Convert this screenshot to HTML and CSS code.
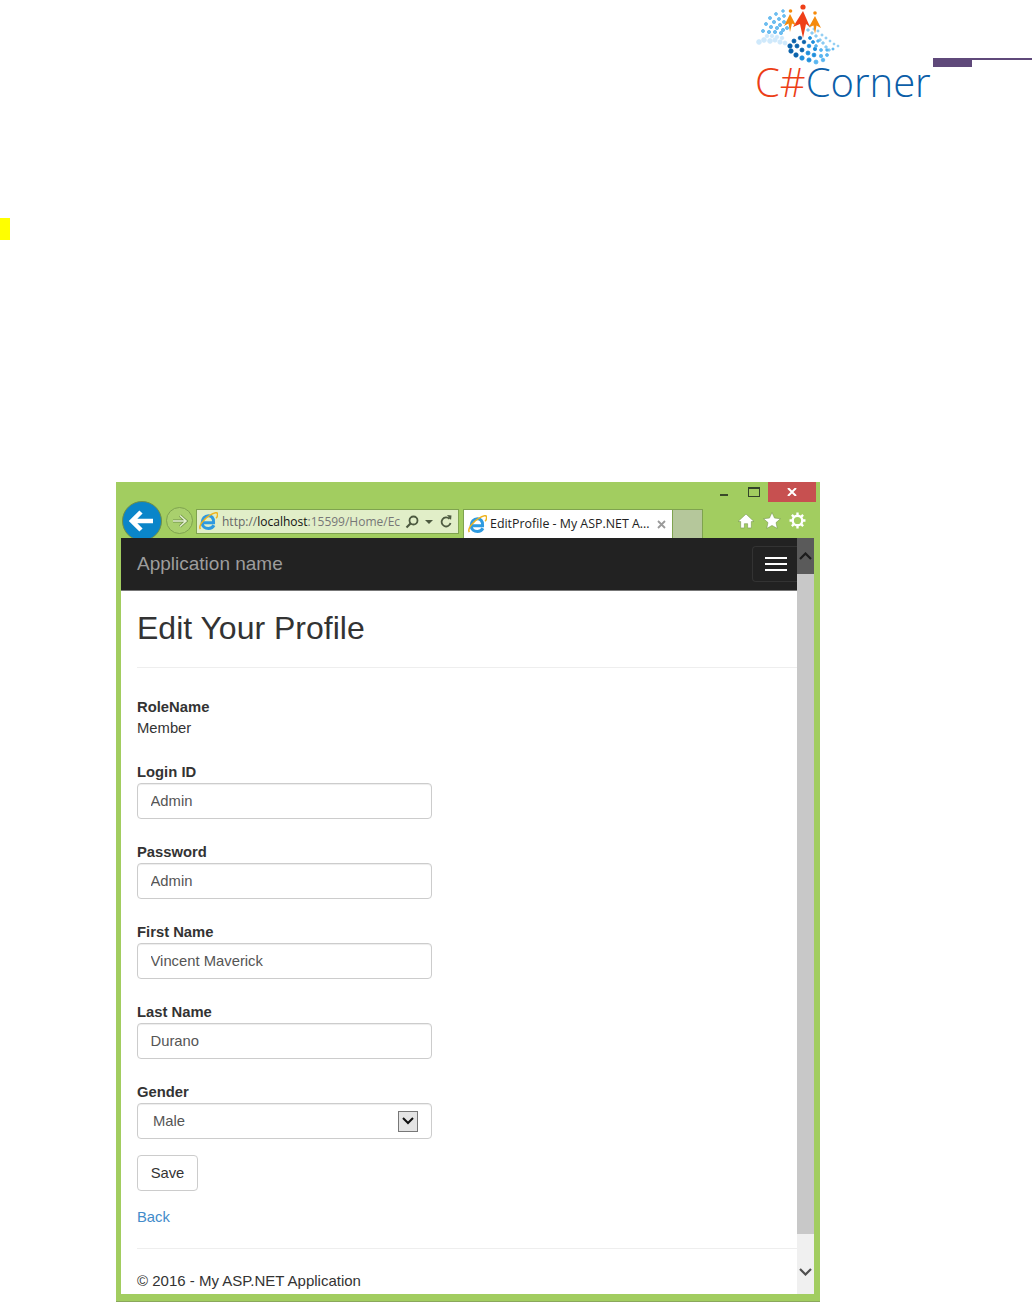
FILE: index.html
```html
<!DOCTYPE html>
<html lang="en">
<head>
  <meta charset="UTF-8">
  <title>Edit Your Profile</title>
  <link rel="stylesheet" href="styles.css">
</head>
<body>
  <header class="top">
    <div class="logo">
      <svg class="logo-mark" width="95" height="66" viewBox="0 0 95 66">
        <g fill="#cfe9fb" stroke="#cfe9fb" stroke-width="0.800">
          <circle cx="9" cy="42" r="2.4"/><circle cx="14" cy="40" r="2.4"/><circle cx="20" cy="41" r="2.4"/><circle cx="25" cy="40" r="2.2"/><circle cx="30" cy="42" r="2.2"/><circle cx="35" cy="43" r="2"/>
          <circle cx="17" cy="36" r="1.8"/><circle cx="22" cy="36" r="1.8"/><circle cx="27" cy="37" r="1.8"/><circle cx="32" cy="38" r="1.8"/>
        </g>
        <g fill="#6cbdf0" stroke="#6cbdf0" stroke-width="1">
          <circle cx="13" cy="31" r="1.5"/><circle cx="16" cy="24" r="1.5"/><circle cx="20" cy="18" r="1.5"/><circle cx="26" cy="14" r="1.4"/><circle cx="33" cy="11" r="1.3"/>
          <circle cx="19" cy="32" r="1.6"/><circle cx="21" cy="27" r="1.6"/><circle cx="24" cy="22" r="1.6"/><circle cx="29" cy="19" r="1.5"/><circle cx="34" cy="16" r="1.4"/>
          <circle cx="25" cy="32" r="1.6"/><circle cx="27" cy="28" r="1.6"/><circle cx="30" cy="25" r="1.6"/><circle cx="34" cy="22" r="1.5"/>
          <circle cx="31" cy="33" r="1.6"/><circle cx="33" cy="30" r="1.6"/><circle cx="37" cy="28" r="1.5"/>
        </g>
        <g fill="#8ccbf3" stroke="#8ccbf3" stroke-width="0.800">
          <circle cx="60" cy="26" r="1.1"/><circle cx="64" cy="29" r="1.1"/><circle cx="68" cy="31" r="1.1"/><circle cx="72" cy="35" r="1.1"/><circle cx="76" cy="38" r="1.1"/><circle cx="80" cy="41" r="1"/><circle cx="84" cy="44" r="1"/><circle cx="88" cy="46" r="1"/>
          <circle cx="58" cy="30" r="1.3"/><circle cx="62" cy="33" r="1.3"/><circle cx="66" cy="36" r="1.3"/><circle cx="70" cy="40" r="1.3"/><circle cx="73" cy="43" r="1.3"/><circle cx="76" cy="47" r="1.3"/><circle cx="79" cy="50" r="1.3"/>
        </g>
        <g fill="#0a62ab" stroke="#0a62ab" stroke-width="0.800">
          <circle cx="40" cy="46" r="2.2"/><circle cx="41" cy="51" r="2.2"/><circle cx="46" cy="55" r="2.2"/><circle cx="44" cy="41" r="2"/><circle cx="47" cy="46" r="2"/><circle cx="52" cy="50" r="2"/><circle cx="50" cy="38" r="1.8"/><circle cx="54" cy="42" r="1.8"/>
        </g>
        <g fill="#1f8fdc" stroke="#1f8fdc" stroke-width="0.800">
          <circle cx="52" cy="58" r="2.2"/><circle cx="59" cy="60" r="2.1"/><circle cx="58" cy="53" r="2"/><circle cx="64" cy="55" r="1.9"/><circle cx="59" cy="46" r="1.8"/><circle cx="65" cy="49" r="1.7"/><circle cx="60" cy="38" r="1.5"/><circle cx="63" cy="42" r="1.5"/>
        </g>
        <g fill="#58b5f0" stroke="#58b5f0" stroke-width="0.800">
          <circle cx="66" cy="62" r="2"/><circle cx="73" cy="60" r="1.8"/><circle cx="71" cy="56" r="1.7"/><circle cx="77" cy="55" r="1.5"/><circle cx="71" cy="50" r="1.5"/><circle cx="77" cy="50" r="1.3"/><circle cx="83" cy="49" r="1.1"/><circle cx="66" cy="46" r="1.4"/><circle cx="68" cy="41" r="1.3"/>
        </g>
        <circle cx="53" cy="7" r="2.6" fill="#ef3f18"/>
        <path d="M53 11 L43 27 L50 24 L53 38 L56 24 L60 27 Z" fill="#ef3f18"/>
        <g fill="#f58a0c">
          <circle cx="40.500" cy="11" r="1.800"/>
          <path d="M40 14 L34 26 L38.500 23.500 L40 32 L42 23.500 L46 25.500 Z"/>
          <circle cx="65" cy="13" r="1.800"/>
          <path d="M65 16 L59 27 L63.500 25.500 L65 34 L66.500 25.500 L71 28 Z"/>
        </g>
      </svg>
      <div class="logo-text"><span class="logo-c">C#</span><span class="logo-corner">Corner</span></div>
    </div>
    <div class="rule"><div class="rule-thick"></div><div class="rule-thin"></div></div>
  </header>
  <div class="mark"></div>

  <div class="window">
    <div class="chrome">
      <div class="caption">
        <svg class="cap-min" width="8" height="2"><rect width="8" height="2" fill="#3a4a2a"/></svg>
        <svg class="cap-max" width="12" height="10"><rect x="0.500" y="0.500" width="11" height="9" fill="none" stroke="#34432a"/><rect x="0" y="0" width="12" height="2" fill="#34432a"/></svg>
        <div class="cap-close">
          <svg width="10" height="8" viewBox="0 0 10 8"><path d="M1 0 L9 8 M9 0 L1 8" stroke="#fff" stroke-width="2"/></svg>
        </div>
      </div>
      <div class="toolbar">
        <div class="back">
          <svg width="26" height="22" viewBox="0 0 26 22"><path d="M12 2 L3 11 L12 20 M3 11 H24" fill="none" stroke="#fff" stroke-width="4.500"/></svg>
        </div>
        <div class="forward">
          <svg width="16" height="14" viewBox="0 0 16 14"><path d="M8 1.500 L14 7 L8 12.500 M14 7 H1" fill="none" stroke="#6f8f48" stroke-width="3"/><path d="M8 1.500 L14 7 L8 12.500 M14 7 H1" fill="none" stroke="#e4f0d0" stroke-width="1.600"/></svg>
        </div>
        <div class="url">
          <svg class="ie" width="19" height="19" viewBox="1 1 15 15">
            <path d="M3.500 9.500 H12.500 C13 5.500 10.500 4 8.500 4 C5.500 4 3.500 6.500 3.500 9.500 C3.500 12.500 6 14 8.500 14 C10.500 14 12 13 12.800 11.500" fill="none" stroke="#2e9ae0" stroke-width="2.400"/>
            <path d="M2 14.500 C0 11 8 3 14.500 1.500 C16.500 1.500 15.500 5 14.500 6" fill="none" stroke="#efb31f" stroke-width="1.200"/>
          </svg>
          <span class="url-text">http://<b>localhost</b><span class="url-dim">:15599/Home/Ec</span></span>
          <svg class="url-search" width="14" height="14" viewBox="0 0 14 14"><circle cx="8.500" cy="5.500" r="4" fill="none" stroke="#4d5a40" stroke-width="1.800"/><path d="M5.500 8.500 L1.500 12.500" stroke="#4d5a40" stroke-width="2.200"/></svg>
          <svg class="url-drop" width="8" height="4"><path d="M0 0 H8 L4 4 Z" fill="#4d5a40"/></svg>
          <svg class="url-refresh" width="12" height="13" viewBox="0 0 12 13"><path d="M9.500 4 A4.500 4.500 0 1 0 10.500 8" fill="none" stroke="#4d5a40" stroke-width="1.800"/><path d="M7 0 L11.500 0.500 L11 5 Z" fill="#4d5a40"/></svg>
        </div>
        <div class="tab">
          <svg class="ie" width="19" height="19" viewBox="1 1 15 15">
            <path d="M3.500 9.500 H12.500 C13 5.500 10.500 4 8.500 4 C5.500 4 3.500 6.500 3.500 9.500 C3.500 12.500 6 14 8.500 14 C10.500 14 12 13 12.800 11.500" fill="none" stroke="#2e9ae0" stroke-width="2.400"/>
            <path d="M2 14.500 C0 11 8 3 14.500 1.500 C16.500 1.500 15.500 5 14.500 6" fill="none" stroke="#efb31f" stroke-width="1.200"/>
          </svg>
          <span class="tab-title">EditProfile - My ASP.NET A...</span>
          <svg class="tab-x" width="9" height="9" viewBox="0 0 9 9"><path d="M1 1 L8 8 M8 1 L1 8" stroke="#9a9a9a" stroke-width="1.800"/></svg>
        </div>
        <div class="newtab"></div>
        <div class="tools">
          <svg width="18" height="16" viewBox="0 0 16 15"><path d="M8 1 L15.500 8 H13 V14 H9.500 V10 H6.500 V14 H3 V8 H0.500 Z" fill="#fff" stroke="#6f8f48" stroke-width="0.500"/></svg>
          <svg width="18" height="17" viewBox="0 0 17 16"><path d="M8.500 0.500 L10.900 5.700 L16.500 6.300 L12.300 10 L13.500 15.500 L8.500 12.700 L3.500 15.500 L4.700 10 L0.500 6.300 L6.100 5.700 Z" fill="#fff" stroke="#6f8f48" stroke-width="0.500"/></svg>
          <svg width="17" height="17" viewBox="0 0 16 16"><circle cx="8" cy="8" r="4.500" fill="none" stroke="#fff" stroke-width="2.200"/><path d="M8 0.500 V3.500 M8 12.500 V15.500 M0.500 8 H3.500 M12.500 8 H15.500 M2.700 2.700 L4.800 4.800 M11.200 11.200 L13.300 13.300 M13.300 2.700 L11.200 4.800 M4.800 11.200 L2.700 13.300" stroke="#fff" stroke-width="2.200"/></svg>
        </div>
      </div>
    </div>

    <div class="viewport">
      <div class="site">
        <nav class="navbar">
          <span class="brand">Application name</span>
          <div class="toggle"><span></span><span></span><span></span></div>
        </nav>
        <main class="content">
          <h1>Edit Your Profile</h1>
          <hr class="rule-h1">
          <div class="role">
            <label>RoleName</label>
            <div>Member</div>
          </div>
          <div class="field">
            <label for="loginId">Login ID</label>
            <input id="loginId" type="text" value="Admin">
          </div>
          <div class="field">
            <label for="password">Password</label>
            <input id="password" type="text" value="Admin">
          </div>
          <div class="field">
            <label for="firstName">First Name</label>
            <input id="firstName" type="text" value="Vincent Maverick">
          </div>
          <div class="field">
            <label for="lastName">Last Name</label>
            <input id="lastName" type="text" value="Durano">
          </div>
          <div class="field">
            <label>Gender</label>
            <div class="select">
              <span>Male</span>
              <span class="select-btn">
                <svg width="12" height="8" viewBox="0 0 12 8"><path d="M1 1 L6 6 L11 1" fill="none" stroke="#111" stroke-width="2"/></svg>
              </span>
            </div>
          </div>
          <button class="btn" type="button">Save</button>
          <a class="back-link" href="#">Back</a>
          <hr class="rule-foot">
          <footer>© 2016 - My ASP.NET Application</footer>
        </main>
      </div>
      <div class="scrollbar">
        <div class="scroll-up">
          <svg width="13" height="8" viewBox="0 0 13 8"><path d="M1 7 L6.500 1.500 L12 7" fill="none" stroke="#1c1c1c" stroke-width="2.200"/></svg>
        </div>
        <div class="scroll-thumb"></div>
        <div class="scroll-track">
          <svg width="13" height="8" viewBox="0 0 13 8"><path d="M1 1 L6.500 6.500 L12 1" fill="none" stroke="#505050" stroke-width="2.200"/></svg>
        </div>
      </div>
    </div>
  </div>
</body>
</html>
```

FILE: styles.css
```css
* {
  box-sizing: border-box;
}
html, body {
  margin: 0;
  padding: 0;
  background: #fff;
}
body {
  font-family: "Liberation Sans", Arial, sans-serif;
  font-size: 14.8px;
  line-height: 20px;
  color: #333;
  height: 1303px;
  overflow: hidden;
}

/* document header */
.top {
  display: flex;
  height: 218px;
  padding-left: 750px;
}
.logo {
  width: 183px;
}
.logo-mark {
  display: block;
  height: 66px;
}
.logo-text {
  font-family: "Open Sans", sans-serif;
  font-weight: 300;
  font-size: 40px;
  line-height: 32px;
  padding-left: 5px;
  white-space: nowrap;
}
.logo-c {
  color: #ec3e16;
}
.logo-corner {
  color: #0b5ea8;
}
.rule {
  flex: 1;
  display: flex;
  margin-top: 58px;
  align-items: flex-start;
}
.rule-thick {
  width: 39px;
  height: 9px;
  background: #5f497a;
}
.rule-thin {
  flex: 1;
  height: 2px;
  background: #5f497a;
}
.mark {
  width: 10px;
  height: 22px;
  background: #ffff00;
}

/* browser window */
.window {
  width: 704px;
  height: 820px;
  margin: 242px 0 0 116px;
  background: #a2cd60;
  border-bottom: 1px solid #8aa85c;
  padding: 0 6px 8px 5px;
}
.chrome {
  height: 56px;
  overflow: hidden;
  margin-left: -5px;
  margin-right: -2px;
}
.caption {
  display: flex;
  justify-content: flex-end;
  align-items: flex-start;
  height: 20px;
}
.cap-min {
  margin: 12px 20px 0 0;
}
.cap-max {
  margin: 5px 8px 0 0;
}
.cap-close {
  width: 48px;
  height: 20px;
  background: #c75050;
  display: flex;
  align-items: center;
  justify-content: center;
}
.toolbar {
  display: flex;
  align-items: flex-start;
  padding-left: 6px;
}
.back {
  width: 40px;
  height: 40px;
  margin-top: -1px;
  border-radius: 50%;
  background: #0a85c9;
  border: 1px solid #6f8f48;
  display: flex;
  align-items: center;
  justify-content: center;
  flex-shrink: 0;
}
.forward {
  width: 27px;
  height: 27px;
  margin: 5px 0 0 4px;
  border-radius: 50%;
  border: 1px solid #7fa34f;
  background: #a9d06d;
  display: flex;
  align-items: center;
  justify-content: center;
  flex-shrink: 0;
}
.url {
  width: 263px;
  height: 25px;
  margin: 7px 0 0 3px;
  background: #e1eec8;
  border: 1px solid #7fa34f;
  display: flex;
  align-items: center;
  padding-left: 2px;
  flex-shrink: 0;
}
.url-text {
  font-family: "Open Sans", sans-serif;
  font-size: 12px;
  color: #666;
  margin-left: 4px;
  width: 180px;
  overflow: hidden;
  white-space: nowrap;
}
.url-text b {
  font-weight: 400;
  color: #111;
}
.url-dim {
  color: #777;
}
.url-search {
  margin-left: 3px;
}
.url-drop {
  margin-left: 6px;
}
.url-refresh {
  margin-left: 7px;
}
.tab {
  width: 210px;
  height: 29px;
  margin: 7px 0 0 4px;
  background: #fff;
  border: 1px solid #7fa34f;
  border-bottom: 0;
  display: flex;
  align-items: center;
  padding-left: 4px;
  flex-shrink: 0;
}
.tab-title {
  font-family: "Open Sans", sans-serif;
  font-size: 12.4px;
  color: #222;
  margin-left: 3px;
  width: 165px;
  white-space: nowrap;
  overflow: hidden;
}
.tab-x {
  margin-left: 2px;
}
.newtab {
  width: 30px;
  height: 29px;
  margin-top: 7px;
  background: #b5c79b;
  border: 1px solid #7fa34f;
  border-left: 0;
  border-bottom: 0;
  flex-shrink: 0;
}
.tools {
  display: flex;
  align-items: center;
  gap: 8px;
  margin: 10px 0 0 34px;
}

/* page inside the browser */
.viewport {
  display: flex;
  height: 756px;
  background: #fff;
}
.site {
  flex: 1;
  min-width: 0;
}
.navbar {
  height: 53px;
  background: #222;
  border-bottom: 1px solid #777;
  display: flex;
  align-items: center;
  justify-content: space-between;
  padding-left: 16px;
}
.brand {
  font-size: 19px;
  color: #9d9d9d;
}
.toggle {
  width: 45px;
  height: 36px;
  border: 1px solid #333;
  border-right: 0;
  border-radius: 4px 0 0 4px;
  padding: 10px 10px 0 12px;
}
.toggle span {
  display: block;
  height: 2px;
  background: #fff;
  margin-bottom: 4px;
}
.content {
  padding-left: 16px;
}
h1 {
  font-size: 32px;
  font-weight: 500;
  line-height: 33px;
  margin: 21px 0 0;
  color: #333;
}
hr {
  border: 0;
  border-top: 1px solid #eee;
  margin: 0;
}
.rule-h1 {
  margin-top: 22px;
}
.role {
  margin-top: 29px;
  height: 65px;
}
label {
  display: block;
  font-weight: bold;
}
.role label {
  margin-bottom: 1px;
}
.field {
  height: 80px;
}
.field label {
  height: 21px;
  line-height: 21px;
}
input {
  display: block;
  width: 295px;
  height: 36px;
  padding: 6px 12.5px;
  font: 14.8px "Liberation Sans", Arial, sans-serif;
  color: #555;
  background: #fff;
  border: 1px solid #ccc;
  border-radius: 4px;
  box-shadow: inset 0 1px 1px rgba(0,0,0,0.075);
}
.select {
  width: 295px;
  height: 36px;
  padding: 0 13px 0 15px;
  color: #555;
  border: 1px solid #ccc;
  border-radius: 4px;
  box-shadow: inset 0 1px 1px rgba(0,0,0,0.075);
  display: flex;
  align-items: center;
  justify-content: space-between;
}
.select-btn {
  width: 20px;
  height: 21px;
  background: #e4e4e4;
  border: 1px solid #777;
  display: flex;
  align-items: center;
  justify-content: center;
}
.btn {
  display: block;
  width: 61px;
  height: 36px;
  margin-top: -7px;
  font: 14.8px "Liberation Sans", Arial, sans-serif;
  color: #333;
  background: #fff;
  border: 1px solid #ccc;
  border-radius: 4px;
}
.back-link {
  display: block;
  margin-top: 16px;
  color: #428bca;
  text-decoration: none;
}
.rule-foot {
  margin-top: 21px;
}
footer {
  margin-top: 22px;
  font-size: 15px;
}

/* scrollbar */
.scrollbar {
  width: 17px;
  display: flex;
  flex-direction: column;
  flex-shrink: 0;
}
.scroll-up {
  height: 36px;
  background: #5a5a5a;
  display: flex;
  align-items: center;
  justify-content: center;
}
.scroll-thumb {
  height: 660px;
  background: #c8c8c8;
}
.scroll-track {
  flex: 1;
  background: #f0f0f0;
  display: flex;
  align-items: center;
  justify-content: center;
  padding-top: 16px;
}
```
